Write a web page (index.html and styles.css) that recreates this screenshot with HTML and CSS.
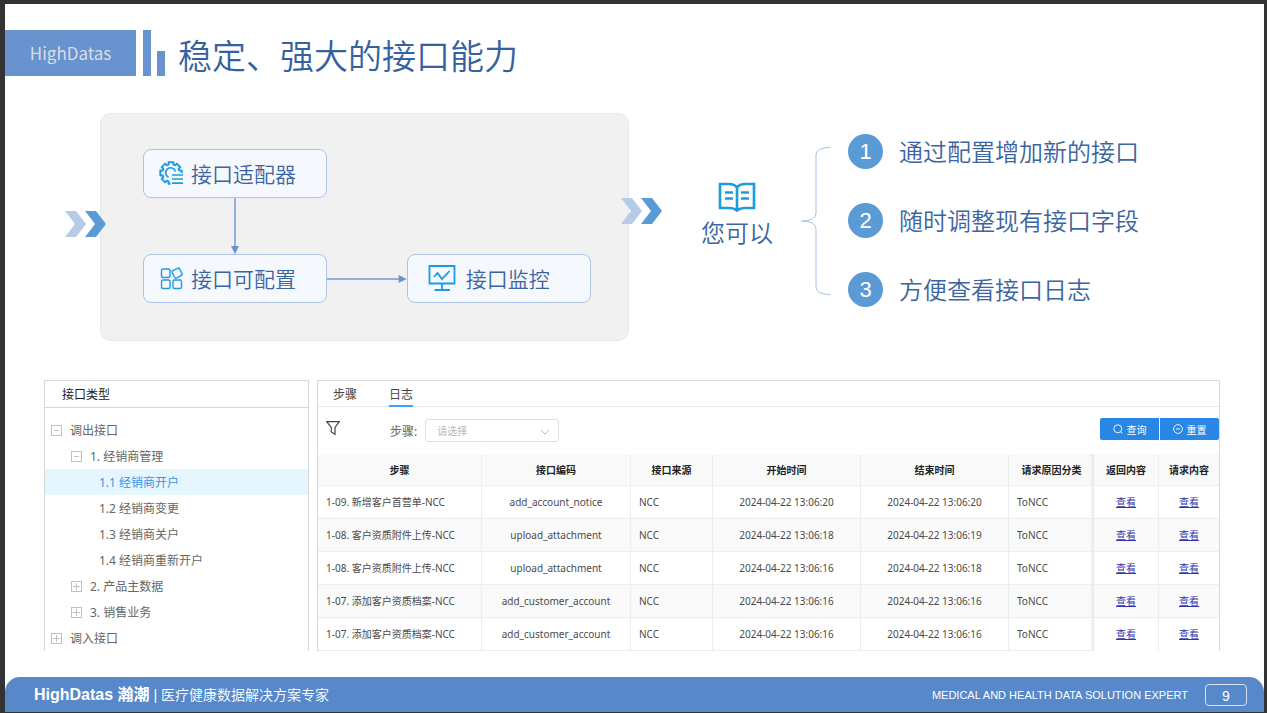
FILE: index.html
```html
<!DOCTYPE html>
<html lang="zh-CN">
<head>
<meta charset="utf-8">
<meta name="viewport" content="width=device-width, initial-scale=1">
<title>稳定、强大的接口能力</title>
<link rel="stylesheet" href="styles.css">
</head>
<body>
<main class="slide">
  <header class="slide-header">
    <div class="brand">HighDatas</div>
    <span class="bar bar-tall"></span>
    <span class="bar bar-short"></span>
    <h1 class="title">稳定、强大的接口能力</h1>
  </header>

  <section class="overview">
    <div class="flow">
      <svg class="chevrons chevrons-in" viewBox="0 0 42 28" aria-hidden="true"><path class="chev-light" d="M0 1h11l10 13-10 13H0l10-13z"/><path class="chev-dark" d="M20 1h11l10 13-10 13H20l10-13z"/></svg>
      <svg class="chevrons chevrons-out" viewBox="0 0 42 28" aria-hidden="true"><path class="chev-light" d="M0 1h11l10 13-10 13H0l10-13z"/><path class="chev-dark" d="M20 1h11l10 13-10 13H20l10-13z"/></svg>
      <div class="node node-adapter">
        <svg class="node-icon" width="24" height="24" viewBox="0 0 24 24" aria-hidden="true">
          <path stroke-width="1.9" stroke-linejoin="round" d="M11.500 22.700h-2l.1-2.400-1.800-.7-1.600 1.700-3.500-3.500 1.700-1.600-.7-1.800-2.400.1v-5l2.400.1.7-1.800-1.700-1.600 3.500-3.500 1.600 1.700 1.800-.7-.1-2.400h5l-.1 2.400 1.800.7 1.600-1.700 3.500 3.500-1.700 1.600.7 1.800 2.400-.1v2.500"/>
          <path stroke-width="1.700" d="M9.500 16.300a5 5 0 1 1 7-5.800M13 14h11M13 18h11M13 22.200h11"/>
        </svg>
        <span>接口适配器</span>
      </div>
      <svg class="arrow arrow-down" width="10" height="56" viewBox="0 0 10 56" aria-hidden="true"><path class="arrow-line" d="M5 0v50"/><path class="arrow-head" d="M1 48h8l-4 8z"/></svg>
      <div class="node node-config">
        <svg class="node-icon" width="24" height="24" viewBox="0 0 24 24" aria-hidden="true">
          <rect x="2.500" y="3" width="8.500" height="8.500" rx="1.500"/><rect x="2.500" y="14" width="8.500" height="8.500" rx="1.500"/><rect x="14" y="14" width="8.500" height="8.500" rx="1.500"/><rect x="14" y="3" width="8.200" height="8.200" rx="1.500" transform="rotate(-27 18.100 7.100)"/>
        </svg>
        <span>接口可配置</span>
      </div>
      <svg class="arrow arrow-right" height="10" aria-hidden="true" viewBox="0 0 82 10" preserveAspectRatio="xMaxYMid slice"><path class="arrow-line" d="M0 5h76"/><path class="arrow-head" d="M74 1v8l8-4z"/></svg>
      <div class="node node-monitor">
        <svg class="node-icon" width="28" height="28" viewBox="0 0 28 28" aria-hidden="true">
          <path stroke-width="1.800" d="M1.500 2h25v17.500h-25zM14 19.500V26M6.500 26h15.500M6 13l3.500-4 4.500 6 7.500-8"/>
        </svg>
        <span>接口监控</span>
      </div>
    </div>

    <div class="you-can">
      <svg width="38" height="30" viewBox="0 0 38 30" aria-hidden="true"><path d="M19 5.500Q16.500 2 11 2H2v24h9q5 0 8 2.500Q22 26 27 26h9V2h-9q-5.500 0-8 3.500zV28M7 10.500h8M7 16.500h8M23 10.500h8M23 16.500h8"/></svg>
      <span>您可以</span>
    </div>
    <svg class="brace" width="30" height="150" viewBox="0 0 30 150" aria-hidden="true"><path d="M29.500 1.500Q15 1.500 15 9v58q0 8-14.500 8Q15 75 15 83v58q0 7.500 14.500 7.500"/></svg>
    <ol class="benefits">
      <li><span class="num">1</span>通过配置增加新的接口</li>
      <li><span class="num">2</span>随时调整现有接口字段</li>
      <li><span class="num">3</span>方便查看接口日志</li>
    </ol>
  </section>

  <section class="workspace">
    <aside class="tree-panel">
      <h2 class="tree-title">接口类型</h2>
      <nav class="tree">
        <button class="row level-1" type="button" aria-expanded="true"><span class="toggle"></span>调出接口</button>
        <button class="row level-2" type="button" aria-expanded="true"><span class="toggle"></span>1. 经销商管理</button>
        <button class="row level-3 active" type="button">1.1 经销商开户</button>
        <button class="row level-3" type="button">1.2 经销商变更</button>
        <button class="row level-3" type="button">1.3 经销商关户</button>
        <button class="row level-3" type="button">1.4 经销商重新开户</button>
        <button class="row level-2" type="button" aria-expanded="false"><span class="toggle"></span>2. 产品主数据</button>
        <button class="row level-2" type="button" aria-expanded="false"><span class="toggle"></span>3. 销售业务</button>
        <button class="row level-1" type="button" aria-expanded="false"><span class="toggle"></span>调入接口</button>
      </nav>
    </aside>

    <div class="log-panel">
      <div class="tabs" role="tablist">
        <button class="tab" type="button" role="tab" aria-selected="false">步骤</button>
        <button class="tab" type="button" role="tab" aria-selected="true">日志</button>
      </div>
      <div class="toolbar">
        <svg class="filter" width="14" height="14" viewBox="0 0 14 14" aria-hidden="true"><path d="M.7.700h12.600L9 6.500v6.800l-3.700-2.300V6.500z"/></svg>
        <label class="step-label" for="step">步骤:</label>
        <span class="select-wrap">
          <select id="step"><option>请选择</option></select>
          <svg class="caret" width="10" height="6" viewBox="0 0 10 6" aria-hidden="true"><path d="M1 1l4 4 4-4"/></svg>
        </span>
        <div class="actions">
          <button class="action" type="button"><svg width="10" height="10" viewBox="0 0 10 10" aria-hidden="true"><circle cx="4.800" cy="4.800" r="4"/><path d="M7.500 7.500l2 2"/></svg>查询</button>
          <button class="action" type="button"><svg width="10" height="10" viewBox="0 0 10 10" aria-hidden="true"><circle cx="5" cy="5" r="4.400"/><path d="M3 5h4"/></svg>重置</button>
        </div>
      </div>
      <table class="log">
        <colgroup><col class="c-step"><col class="c-code"><col class="c-source"><col class="c-time"><col class="c-time"><col class="c-reason"><col class="c-return"><col class="c-request"></colgroup>
        <thead>
          <tr><th>步骤</th><th>接口编码</th><th>接口来源</th><th>开始时间</th><th>结束时间</th><th class="edge">请求原因分类</th><th>返回内容</th><th>请求内容</th></tr>
        </thead>
        <tbody>
          <tr><td>1-09. 新增客户首营单-NCC</td><td class="mid">add_account_notice</td><td>NCC</td><td class="mid">2024-04-22 13:06:20</td><td class="mid">2024-04-22 13:06:20</td><td class="edge">ToNCC</td><td class="mid"><a href="#">查看</a></td><td class="mid"><a href="#">查看</a></td></tr>
          <tr><td>1-08. 客户资质附件上传-NCC</td><td class="mid">upload_attachment</td><td>NCC</td><td class="mid">2024-04-22 13:06:18</td><td class="mid">2024-04-22 13:06:19</td><td class="edge">ToNCC</td><td class="mid"><a href="#">查看</a></td><td class="mid"><a href="#">查看</a></td></tr>
          <tr><td>1-08. 客户资质附件上传-NCC</td><td class="mid">upload_attachment</td><td>NCC</td><td class="mid">2024-04-22 13:06:16</td><td class="mid">2024-04-22 13:06:18</td><td class="edge">ToNCC</td><td class="mid"><a href="#">查看</a></td><td class="mid"><a href="#">查看</a></td></tr>
          <tr><td>1-07. 添加客户资质档案-NCC</td><td class="mid">add_customer_account</td><td>NCC</td><td class="mid">2024-04-22 13:06:16</td><td class="mid">2024-04-22 13:06:16</td><td class="edge">ToNCC</td><td class="mid"><a href="#">查看</a></td><td class="mid"><a href="#">查看</a></td></tr>
          <tr><td>1-07. 添加客户资质档案-NCC</td><td class="mid">add_customer_account</td><td>NCC</td><td class="mid">2024-04-22 13:06:16</td><td class="mid">2024-04-22 13:06:16</td><td class="edge">ToNCC</td><td class="mid"><a href="#">查看</a></td><td class="mid"><a href="#">查看</a></td></tr>
        </tbody>
      </table>
    </div>
  </section>

  <footer class="footer">
    <p class="company"><strong>HighDatas 瀚潮</strong> | 医疗健康数据解决方案专家</p>
    <p class="tagline">MEDICAL AND HEALTH DATA SOLUTION EXPERT</p>
    <span class="page">9</span>
  </footer>
</main>
</body>
</html>
```
FILE: styles.css
```css
* { box-sizing: border-box; }

body {
  margin: 0;
  min-height: 100vh;
  display: flex;
  padding: 4px 3px 1px 5px;
  background: #333;
  font-family: "Noto Sans", "Noto Sans CJK SC", sans-serif;
  color: #555;
}

h1, h2, p, ol { margin: 0; padding: 0; }

button, select { font-family: inherit; }

.slide {
  flex: 1;
  min-width: 0;
  display: flex;
  flex-direction: column;
  background: #fff;
}

/* Header */
.slide-header {
  display: flex;
  align-items: flex-end;
  height: 46px;
  margin-top: 26px;
}

.brand {
  width: 131px;
  height: 46px;
  line-height: 46px;
  text-align: center;
  background: #6993cf;
  color: #d9dde4;
  font-family: "Noto Sans CJK SC", sans-serif;
  font-size: 17px;
}

.bar { width: 8px; margin-left: 7px; background: #6993cf; }
.bar-tall { height: 46px; }
.bar-short { height: 25px; margin-left: 6px; }

.title {
  margin-left: 13px;
  line-height: 42px;
  font-family: "Noto Sans CJK SC", sans-serif;
  font-size: 34px;
  font-weight: 350;
  color: #35629f;
}

/* Overview */
.overview {
  display: flex;
  align-items: center;
  margin-top: 37px;
  padding: 0 125px 0 95px;
  font-family: "Noto Sans CJK SC", sans-serif;
  color: #3b659f;
}

.flow {
  position: relative;
  flex: 1;
  display: grid;
  grid-template-columns: 185fr 80fr 185fr;
  grid-template-rows: 49px 56px 49px;
  padding: 35px 37px 37px 42px;
  border: 1px solid #e1e8f1;
  border-radius: 11px;
  background: #f1f1f1;
}

.chevrons { position: absolute; width: 42px; height: 28px; }
.chevrons-in { left: -36px; top: 96px; }
.chevrons-out { right: -35px; top: 83px; }
.chev-light { fill: #b7cbe8; }
.chev-dark { fill: #5b9bd5; }

.node {
  display: flex;
  align-items: center;
  gap: 8px;
  padding-left: 15px;
  padding-bottom: 2px;
  border: 1px solid #adc4e6;
  border-radius: 8px;
  background: #f5f8fd;
  font-size: 21px;
  font-weight: 350;
}

.node-config { grid-area: 3 / 1; }
.node-monitor { grid-area: 3 / 3; padding-left: 20px; gap: 10px; }

.node-icon { fill: none; stroke: #1c9be0; stroke-width: 1.4; }

.arrow-down { grid-area: 2 / 1; justify-self: center; }
.arrow-right { grid-area: 3 / 2; align-self: center; width: 100%; }
.arrow-line { stroke: #6f98d0; stroke-width: 1.4; fill: none; }
.arrow-head { fill: #6993cf; }

.you-can {
  display: flex;
  flex-direction: column;
  align-items: center;
  margin-left: 72px;
  margin-bottom: 22px;
  font-size: 24px;
  line-height: 36px;
  font-weight: 350;
}
.you-can svg { fill: none; stroke: #1c9be0; stroke-width: 2.6; margin-bottom: 2px; }

.brace { margin-left: 28px; margin-bottom: 12px; fill: none; stroke: #a9c1e4; }

.benefits {
  display: flex;
  flex-direction: column;
  gap: 34px;
  margin-left: 17px;
  margin-bottom: 14px;
  list-style: none;
  font-size: 24px;
  line-height: 33px;
  font-weight: 350;
  white-space: nowrap;
}
.benefits li { display: flex; gap: 16px; }

.num {
  width: 35px;
  height: 35px;
  border-radius: 50%;
  background: #5b9bd5;
  color: #fff;
  text-align: center;
  line-height: 36px;
  font-family: "Liberation Sans", sans-serif;
  font-size: 22px;
}

/* Workspace */
.workspace {
  display: flex;
  align-items: stretch;
  gap: 8px;
  margin-top: 39px;
  padding: 0 44px 0 39px;
}

.tree-panel {
  width: 265px;
  border: 1px solid #d6d6d6;
  border-bottom: 0;
}

.tree-title {
  height: 27px;
  padding-left: 17px;
  border-bottom: 1px solid #d6d6d6;
  line-height: 27px;
  font-size: 12px;
  font-weight: 400;
  color: #222;
}

.tree { display: flex; flex-direction: column; padding-top: 9px; }

.row {
  display: flex;
  align-items: center;
  gap: 8px;
  height: 26px;
  padding: 0 6px;
  border: 0;
  background: none;
  font-size: 12px;
  color: #666;
}
.level-2 { padding-left: 26px; }
.level-3 { padding-left: 54px; }
.active { background: #e6f6ff; color: #3296ee; }

.toggle {
  width: 11px;
  height: 11px;
  border: 1px solid #c0c0c0;
  background: linear-gradient(#c0c0c0, #c0c0c0) center / 5px 1px no-repeat;
}
[aria-expanded="false"] > .toggle {
  background:
    linear-gradient(#c0c0c0, #c0c0c0) center / 7px 1px no-repeat,
    linear-gradient(#c0c0c0, #c0c0c0) center / 1px 7px no-repeat;
}

.log-panel {
  flex: 1;
  min-width: 0;
  border: 1px solid #d9d9dc;
  border-bottom: 0;
}

.tabs {
  display: flex;
  gap: 32px;
  height: 26px;
  padding-left: 15px;
  border-bottom: 1px solid #e6e8f0;
}
.tab {
  height: 26px;
  padding: 2px 0 0;
  border: 0;
  border-bottom: 2px solid transparent;
  background: none;
  font-size: 12px;
  color: #444;
}
.tab[aria-selected="true"] { border-bottom-color: #409eff; }

.toolbar { display: flex; align-items: center; height: 47px; padding-left: 8px; }
.filter { fill: none; stroke: #444; stroke-width: 1.2; margin-bottom: 5px; }
.step-label { margin-left: 50px; font-size: 12px; color: #666; }

.select-wrap { position: relative; width: 134px; margin-left: 8px; }
.select-wrap select {
  display: block;
  width: 100%;
  height: 23px;
  padding: 0 11px;
  appearance: none;
  border: 1px solid #dcdfe6;
  border-radius: 3px;
  background: #fff;
  font-size: 10px;
  color: #b4b8c0;
}
.caret { position: absolute; right: 9px; top: 10px; fill: none; stroke: #b4b8c0; pointer-events: none; }

.actions { display: flex; gap: 1px; margin-left: auto; margin-bottom: 3px; }
.action {
  display: flex;
  align-items: center;
  justify-content: center;
  gap: 4px;
  width: 59px;
  height: 22px;
  padding: 0;
  border: 0;
  border-radius: 2px 0 0 2px;
  background: #2a86e4;
  font-size: 10px;
  color: #fff;
}
.action + .action { border-radius: 0 2px 2px 0; }
.action svg { fill: none; stroke: #fff; stroke-width: 0.9; }

.log {
  width: 100%;
  table-layout: fixed;
  border-collapse: separate;
  border-spacing: 0;
  font-size: 10px;
  color: #4a4a4a;
}
.c-step { width: 164px; }
.c-code { width: 149px; }
.c-source { width: 82px; }
.c-time { width: 148px; }
.c-reason { width: 85px; }
.c-return { width: 65px; }
.c-request { width: 60px; }

.log th, .log td {
  height: 33px;
  padding: 0 8px;
  border-right: 1px solid #ebedf5;
  border-bottom: 1px solid #ebedf5;
  text-align: left;
  line-height: 16px;
  white-space: nowrap;
}
.log th { height: 32px; padding: 0; background-color: #f9f9fa; text-align: center; font-weight: 700; color: #222; }
.log tbody tr:nth-child(even) { background: #fafafa; }
.log tr > :last-child { border-right: 0; }
.log .mid { text-align: center; }
.log tbody tr:last-child > :nth-last-child(-n+2) { border-bottom-color: transparent; }
.log .edge { border-right: 0; background-image: linear-gradient(to right, transparent, #e6e6e6); background-size: 4px 100%; background-position: right; background-repeat: no-repeat; }
.log a { color: #3434b0; }

/* Footer */
.footer {
  display: flex;
  align-items: center;
  height: 35px;
  margin-top: auto;
  padding: 0 17px 0 29px;
  border-radius: 15px 15px 0 0;
  background: #5788ca;
  font-family: "Liberation Sans", "Noto Sans CJK SC", sans-serif;
  color: #fff;
}
.company { font-size: 14px; font-weight: 350; line-height: 20px; }
.company strong { font-size: 16px; font-weight: 700; }
.tagline { margin-left: auto; font-size: 11px; }
.page {
  width: 42px;
  height: 22px;
  margin-left: 17px;
  border: 1px solid #d5e2f4;
  border-radius: 4px;
  line-height: 22px;
  text-align: center;
  font-size: 14px;
}
```
